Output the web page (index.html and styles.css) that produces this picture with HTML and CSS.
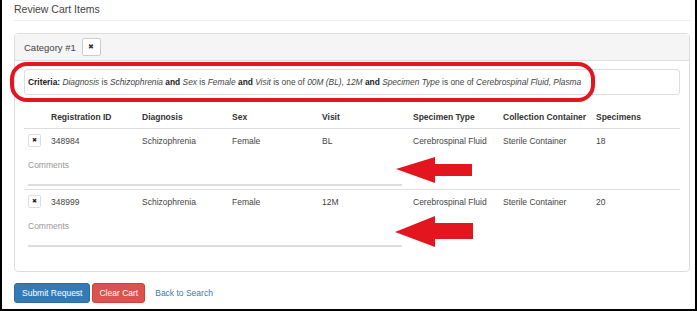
FILE: index.html
```html
<!DOCTYPE html>
<html lang="en">
<head>
    <meta charset="UTF-8">
    <title>Review Cart Items</title>
    <link rel="stylesheet" href="styles.css">
</head>
<body>
    <div class="frame">
        <h1 class="page-title">Review Cart Items</h1>

        <div class="panel">
            <div class="panel-heading">
                <span>Category #1</span>
                <button class="btn-remove">&#10006;</button>
            </div>
            <div class="panel-body">
                <div class="criteria">
                    <b>Criteria:</b> <i>Diagnosis</i> is <i>Schizophrenia</i> <b>and</b> <i>Sex</i> is <i>Female</i> <b>and</b> <i>Visit</i> is one of <i>00M (BL), 12M</i> <b>and</b> <i>Specimen Type</i> is one of <i>Cerebrospinal Fluid, Plasma</i>
                </div>

                <div class="cart-table">
                    <div class="cart-row cart-head">
                        <div></div>
                        <div>Registration ID</div>
                        <div>Diagnosis</div>
                        <div>Sex</div>
                        <div>Visit</div>
                        <div>Specimen Type</div>
                        <div>Collection Container</div>
                        <div>Specimens</div>
                    </div>

                    <div class="cart-item">
                        <div class="cart-row">
                            <div><button class="btn-x">&#10006;</button></div>
                            <div>348984</div>
                            <div>Schizophrenia</div>
                            <div>Female</div>
                            <div>BL</div>
                            <div>Cerebrospinal Fluid</div>
                            <div>Sterile Container</div>
                            <div>18</div>
                        </div>
                        <div class="comments">Comments</div>
                    </div>

                    <div class="cart-item">
                        <div class="cart-row">
                            <div><button class="btn-x">&#10006;</button></div>
                            <div>348999</div>
                            <div>Schizophrenia</div>
                            <div>Female</div>
                            <div>12M</div>
                            <div>Cerebrospinal Fluid</div>
                            <div>Sterile Container</div>
                            <div>20</div>
                        </div>
                        <div class="comments">Comments</div>
                    </div>
                </div>
            </div>
        </div>

        <div class="actions">
            <button class="btn btn-primary">Submit Request</button>
            <button class="btn btn-danger">Clear Cart</button>
            <a class="back-link" href="#">Back to Search</a>
        </div>

        <!-- red annotations drawn over the screenshot -->
        <svg class="markup" width="697" height="311" viewBox="0 0 697 311">
            <rect x="12" y="64" width="581" height="36" rx="15" fill="none" stroke="#e3151f" stroke-width="4"/>
            <polygon points="396,169 435,157 435,164 472,164 472,176 435,176 435,183" fill="#e3151f"/>
            <polygon points="395,232 435,216 435,223 473,223 473,239 435,239 435,247" fill="#e3151f"/>
        </svg>
    </div>
</body>
</html>
```

FILE: styles.css
```css
* {
    margin: 0;
    padding: 0;
    box-sizing: border-box;
}

body {
    font-family: 'Liberation Sans', Arial, sans-serif;
    font-size: 8.5px;
    color: #444;
    background: white;
}

.frame {
    position: relative;
    width: 697px;
    height: 311px;
    border: 2px solid #000;
    border-top: none;
    padding: 0 5px 0 12px;
}

.page-title {
    font-size: 10.5px;
    font-weight: normal;
    color: #444;
    line-height: 18px;
    padding-bottom: 2px;
    border-bottom: 1px solid #eee;
    margin-bottom: 12px;
}

.panel {
    border: 1px solid #ddd;
    border-radius: 4px;
}

.panel-heading {
    display: flex;
    align-items: center;
    gap: 6px;
    height: 27px;
    padding: 0 9px;
    background: #f5f5f5;
    border-bottom: 1px solid #ddd;
    font-size: 9.5px;
    color: #444;
}

.btn-remove {
    width: 19px;
    height: 18px;
    background: white;
    border: 1px solid #ccc;
    border-radius: 2px;
    font-size: 7px;
    color: #333;
}

.panel-body {
    padding: 8px 9px 21px;
}

.criteria {
    height: 26px;
    padding: 0 3px;
    border: 1px solid #ddd;
    border-radius: 3px;
    line-height: 24px;
    font-size: 8.4px;
    color: #444;
    white-space: nowrap;
}

.criteria b {
    color: #222;
}

.cart-table {
    margin-top: 11px;
}

.cart-row {
    display: grid;
    grid-template-columns: 27px 91px 90px 90px 91px 90px 93px 1fr;
    align-items: center;
    line-height: 12px;
}

.cart-head {
    height: 23px;
    font-weight: bold;
    color: #333;
    border-bottom: 1px solid #ddd;
}

.cart-item {
    padding-top: 5px;
    padding-bottom: 3px;
    border-bottom: 1px solid #ddd;
}

.cart-item:last-child {
    border-bottom: none;
}

.btn-x {
    display: block;
    width: 13px;
    height: 13px;
    margin-left: 4px;
    background: white;
    border: 1px solid #ddd;
    border-radius: 2px;
    font-size: 6px;
    line-height: 11px;
    color: #222;
}

.comments {
    width: 374px;
    margin: 12px 0 0 4px;
    padding-bottom: 13px;
    line-height: 12px;
    color: #999;
    border-bottom: 2px solid #ddd;
}

.actions {
    display: flex;
    align-items: center;
    margin-top: 11px;
}

.btn {
    height: 20px;
    padding: 0 7px;
    border-radius: 3px;
    font-family: inherit;
    font-size: 8.5px;
    color: white;
    margin-right: 2px;
}

.btn-primary {
    background: #337ab7;
    border: 1px solid #2e6da4;
}

.btn-danger {
    padding: 0 6px;
    background: #d9534f;
    border: 1px solid #d43f3a;
}

.back-link {
    margin-left: 8px;
    color: #337ab7;
    text-decoration: none;
}

.markup {
    position: absolute;
    left: -2px;
    top: 0;
    pointer-events: none;
}
```
